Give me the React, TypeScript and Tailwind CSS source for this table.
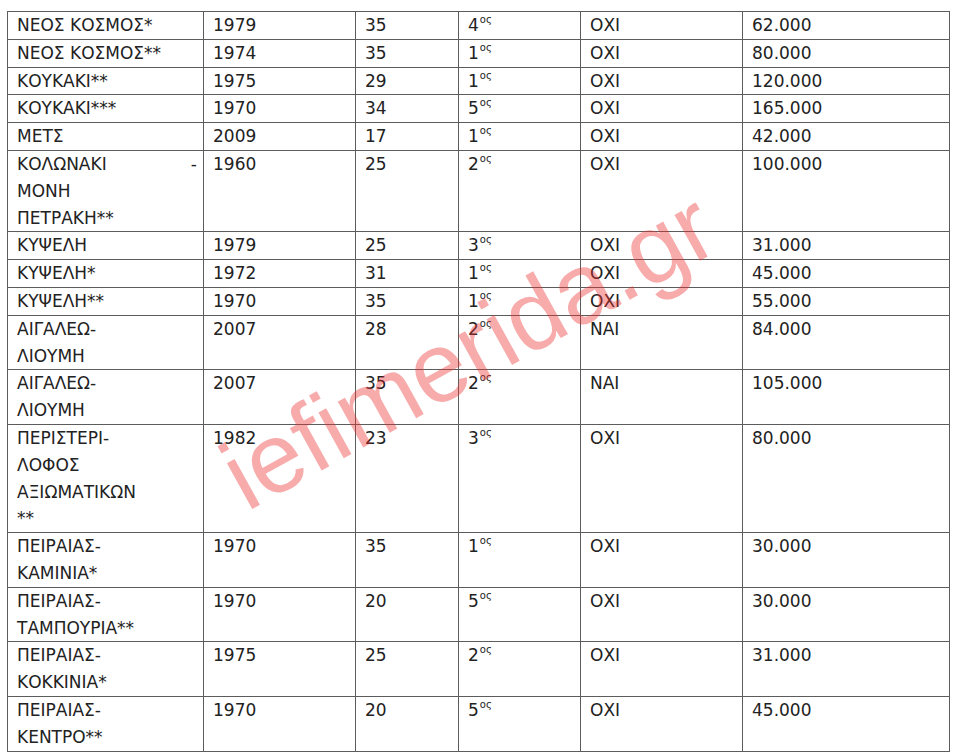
type Row = {
  area: string[];
  year: string;
  age: string;
  floor: string;
  parking: string;
  price: string;
};

const rows: Row[] = [
  { area: ['ΝΕΟΣ ΚΟΣΜΟΣ*'], year: '1979', age: '35', floor: '4', parking: 'ΟΧΙ', price: '62.000' },
  { area: ['ΝΕΟΣ ΚΟΣΜΟΣ**'], year: '1974', age: '35', floor: '1', parking: 'ΟΧΙ', price: '80.000' },
  { area: ['ΚΟΥΚΑΚΙ**'], year: '1975', age: '29', floor: '1', parking: 'ΟΧΙ', price: '120.000' },
  { area: ['ΚΟΥΚΑΚΙ***'], year: '1970', age: '34', floor: '5', parking: 'ΟΧΙ', price: '165.000' },
  { area: ['ΜΕΤΣ'], year: '2009', age: '17', floor: '1', parking: 'ΟΧΙ', price: '42.000' },
  { area: ['ΚΟΛΩΝΑΚΙ|-', 'ΜΟΝΗ', 'ΠΕΤΡΑΚΗ**'], year: '1960', age: '25', floor: '2', parking: 'ΟΧΙ', price: '100.000' },
  { area: ['ΚΥΨΕΛΗ'], year: '1979', age: '25', floor: '3', parking: 'ΟΧΙ', price: '31.000' },
  { area: ['ΚΥΨΕΛΗ*'], year: '1972', age: '31', floor: '1', parking: 'ΟΧΙ', price: '45.000' },
  { area: ['ΚΥΨΕΛΗ**'], year: '1970', age: '35', floor: '1', parking: 'ΟΧΙ', price: '55.000' },
  { area: ['ΑΙΓΑΛΕΩ-', 'ΛΙΟΥΜΗ'], year: '2007', age: '28', floor: '2', parking: 'ΝΑΙ', price: '84.000' },
  { area: ['ΑΙΓΑΛΕΩ-', 'ΛΙΟΥΜΗ'], year: '2007', age: '35', floor: '2', parking: 'ΝΑΙ', price: '105.000' },
  { area: ['ΠΕΡΙΣΤΕΡΙ-', 'ΛΟΦΟΣ', 'ΑΞΙΩΜΑΤΙΚΩΝ', '**'], year: '1982', age: '23', floor: '3', parking: 'ΟΧΙ', price: '80.000' },
  { area: ['ΠΕΙΡΑΙΑΣ-', 'ΚΑΜΙΝΙΑ*'], year: '1970', age: '35', floor: '1', parking: 'ΟΧΙ', price: '30.000' },
  { area: ['ΠΕΙΡΑΙΑΣ-', 'ΤΑΜΠΟΥΡΙΑ**'], year: '1970', age: '20', floor: '5', parking: 'ΟΧΙ', price: '30.000' },
  { area: ['ΠΕΙΡΑΙΑΣ-', 'ΚΟΚΚΙΝΙΑ*'], year: '1975', age: '25', floor: '2', parking: 'ΟΧΙ', price: '31.000' },
  { area: ['ΠΕΙΡΑΙΑΣ-', 'ΚΕΝΤΡΟ**'], year: '1970', age: '20', floor: '5', parking: 'ΟΧΙ', price: '45.000' },
];

const cell = 'border border-[#5c5c5c] pl-[9px] pr-[6px] align-top';

const AreaCell = ({ lines }: { lines: string[] }) => (
  <td className={cell}>
    {lines.map((line, i) =>
      line.includes('|') ? (
        <div key={i} className="flex justify-between">
          <span>{line.split('|')[0]}</span>
          <span>{line.split('|')[1]}</span>
        </div>
      ) : (
        <div key={i}>{line}</div>
      )
    )}
  </td>
);

export default function App() {
  return (
    <div className="relative w-[960px] h-[754px] overflow-hidden bg-white pt-[11px] pl-[7px]">
      <table
        className="table-fixed border-collapse text-[17px] leading-[26.8px] text-[#222]"
        style={{ fontFamily: '"DejaVu Sans", "Noto Sans", sans-serif' }}
      >
        <colgroup>
          <col className="w-[196px]" />
          <col className="w-[152px]" />
          <col className="w-[103px]" />
          <col className="w-[122px]" />
          <col className="w-[162px]" />
          <col className="w-[207px]" />
        </colgroup>
        <tbody>
          {rows.map((row, index) => (
            <tr key={index}>
              <AreaCell lines={row.area} />
              <td className={cell}>{row.year}</td>
              <td className={cell}>{row.age}</td>
              <td className={cell}>
                {row.floor}
                <sup className="relative -top-2 text-[10px] ml-[1px]">ος</sup>
              </td>
              <td className={cell}>{row.parking}</td>
              <td className={cell}>{row.price}</td>
            </tr>
          ))}
        </tbody>
      </table>

      <div
        className="pointer-events-none absolute left-[468px] top-[350px] -translate-x-1/2 -translate-y-1/2 -rotate-[29deg] whitespace-nowrap text-[99px] leading-none text-[rgba(236,45,45,0.4)]"
        style={{ fontFamily: '"Liberation Sans", Arial, sans-serif' }}
      >
        iefimerida.gr
      </div>
    </div>
  );
}
